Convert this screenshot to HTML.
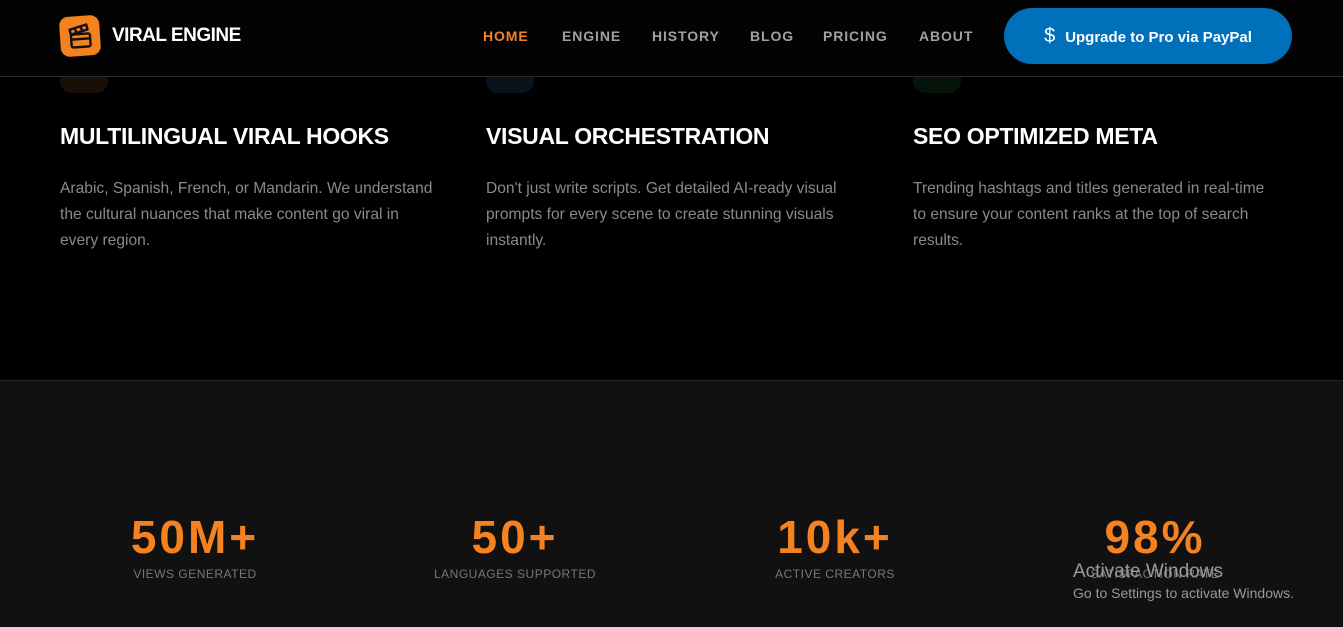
<!DOCTYPE html>
<html><head><meta charset="utf-8"><style>
*{margin:0;padding:0;box-sizing:border-box}
body{width:1343px;height:627px;overflow:hidden;background:#000;font-family:"Liberation Sans",sans-serif;position:relative}
.hdr{position:absolute;left:0;top:0;width:1343px;height:77px;background:rgba(3,3,3,.96);border-bottom:1px solid #2a2a2a;z-index:5}
.logo{position:absolute;left:60px;top:16px;width:40px;height:40px;border-radius:9px;background:#f58220;transform:rotate(-4deg)}
.brand{position:absolute;left:112px;top:25px;color:#fff;font-weight:bold;font-size:19px;letter-spacing:-0.5px}
.nav{position:absolute;top:28px;font-size:14px;font-weight:bold;letter-spacing:0.9px;color:#a0a0a0}
.btn{position:absolute;left:1004px;top:8px;width:288px;height:56px;border-radius:28px;background:#0070ba;color:#fff;font-weight:bold;font-size:15px;line-height:56px;text-align:center}
.ic{position:absolute;top:45px;width:48px;height:48px;border-radius:12px}
.h{position:absolute;top:123px;color:#fff;font-weight:bold;font-size:23px;letter-spacing:-0.3px}
.p{position:absolute;top:176px;color:#8a8a8a;font-size:15.6px;line-height:26px;width:376px}
.stats{position:absolute;left:0;top:380px;width:1343px;height:247px;background:#111;border-top:1px solid #262626}
.n{position:absolute;top:510px;color:#f58220;font-weight:900;font-size:46px;letter-spacing:3px;text-align:center;width:300px}
.l{position:absolute;top:567px;color:#777;font-size:12px;letter-spacing:0.5px;text-align:center;width:300px}
</style></head><body>
<div class="ic" style="left:60px;background:#1a0f05"></div>
<div class="ic" style="left:486px;background:#07121d"></div>
<div class="ic" style="left:913px;background:#04140a"></div>
<div class="hdr">
<div class="logo"><svg width="40" height="40" viewBox="0 0 40 40"><g fill="none" stroke="#111" stroke-width="2.4" stroke-linejoin="round"><rect x="11" y="18" width="19" height="13" rx="2"/><path d="M11 18l-1-5 17-4 1 5zM15 12l2 5M21 10.5l2 5M11 23h19"/></g></svg></div>
<div class="brand">VIRAL ENGINE</div>
<div class="nav" style="left:483px;color:#f58220">HOME</div>
<div class="nav" style="left:562px">ENGINE</div>
<div class="nav" style="left:652px">HISTORY</div>
<div class="nav" style="left:750px">BLOG</div>
<div class="nav" style="left:823px">PRICING</div>
<div class="nav" style="left:919px">ABOUT</div>
<div class="btn"><span style="font-weight:normal;font-size:20px;margin-right:10px">$</span>Upgrade to Pro via PayPal</div>
</div>
<div class="h" style="left:60px">MULTILINGUAL VIRAL HOOKS</div>
<div class="h" style="left:486px">VISUAL ORCHESTRATION</div>
<div class="h" style="left:913px">SEO OPTIMIZED META</div>
<div class="p" style="left:60px">Arabic, Spanish, French, or Mandarin. We understand the cultural nuances that make content go viral in every region.</div>
<div class="p" style="left:486px">Don't just write scripts. Get detailed AI-ready visual prompts for every scene to create stunning visuals instantly.</div>
<div class="p" style="left:913px;width:362px">Trending hashtags and titles generated in real-time to ensure your content ranks at the top of search results.</div>
<div class="stats"></div>
<div class="n" style="left:45px">50M+</div><div class="l" style="left:45px">VIEWS GENERATED</div>
<div class="n" style="left:365px">50+</div><div class="l" style="left:365px">LANGUAGES SUPPORTED</div>
<div class="n" style="left:685px">10k+</div><div class="l" style="left:685px">ACTIVE CREATORS</div>
<div class="n" style="left:1005px">98%</div><div class="l" style="left:1005px">SATISFACTION RATE</div>
<div style="position:absolute;left:1073px;top:561px;color:#999;font-size:19px">Activate Windows</div>
<div style="position:absolute;left:1073px;top:585px;color:#999;font-size:14px">Go to Settings to activate Windows.</div>
</body></html>
